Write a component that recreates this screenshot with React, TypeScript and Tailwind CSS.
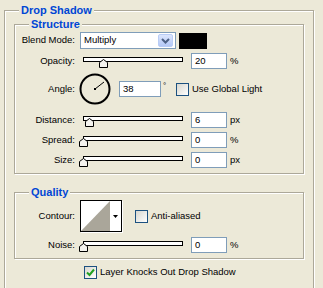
import type { ReactNode } from "react";

const Group = ({ title, className, children }: { title: string; className: string; children: ReactNode }) => (
  <div className={`border border-[#aca899] shadow-[inset_1px_1px_0_#fff,1px_1px_0_#fff] ${className}`}>
    <div className="-mt-[7px] ml-[14px] w-fit px-[2px] h-[12px] leading-[12px] bg-[#ece9d8] text-[11px] font-bold text-[#0046d5]">
      {title}
    </div>
    {children}
  </div>
);

const Label = ({ children }: { children: ReactNode }) => (
  <div className="w-[60px] shrink-0 text-right whitespace-nowrap">{children}</div>
);

const Field = ({ value, w = "w-[36px]" }: { value: string; w?: string }) => (
  <div className={`${w} h-[16px] ml-[8px] border border-[#7f9db9] bg-white pl-[3px] leading-[14px]`}>{value}</div>
);

const Slider = ({ pos }: { pos: number }) => (
  <div className="relative w-[100px] h-[16px] ml-[8px] shrink-0">
    <div className="absolute left-0 top-[4px] w-[100px] h-[5px] border border-black bg-white" />
    <svg className="absolute top-[6px]" style={{ left: pos - 4 }} width="9" height="9">
      <path d="M0.5 8.5 V3.5 L4.5 0.5 L8.5 3.5 V8.5 Z" fill="#f4f3ee" stroke="#000" />
    </svg>
  </div>
);

const Check = ({ on = false }: { on?: boolean }) => (
  <div className="w-[13px] h-[13px] shrink-0 border border-[#1c5180] bg-gradient-to-br from-[#d8d7cf] to-white flex items-center justify-center">
    {on && (
      <svg width="9" height="9" viewBox="0 0 9 9">
        <path d="M1 4.5 L3.5 7 L8 1.5" fill="none" stroke="#21a121" strokeWidth="2" />
      </svg>
    )}
  </div>
);

const SliderRow = ({ label, pos, value, unit, className }: { label: string; pos: number; value: string; unit: string; className: string }) => (
  <div className={`flex items-center h-[16px] ${className}`}>
    <Label>{label}</Label>
    <Slider pos={pos} />
    <Field value={value} />
    <span className="ml-[3px]">{unit}</span>
  </div>
);

export default function App() {
  return (
    <div className="w-[323px] h-[288px] overflow-hidden bg-[#ece9d8] pt-[10px] pl-[4px] text-black text-[9.5px] font-['Liberation_Sans',Arial,sans-serif]">
      <Group title="Drop Shadow" className="w-[310px] h-[300px]">
        <Group title="Structure" className="mt-[8px] ml-[9px] w-[290px] h-[150px]">
          <div className="flex items-center h-[17px] mt-[2px]">
            <Label>Blend Mode:</Label>
            <div className="ml-[5px] w-[96px] h-[17px] border border-[#7f9db9] bg-white flex items-center">
              <span className="pl-[3px] flex-1">Multiply</span>
              <div className="w-[15px] h-[13px] mr-[2px] rounded-[2px] border border-[#b9cdf6] bg-gradient-to-b from-[#dce6fd] to-[#b4c8f6] flex items-center justify-center">
                <svg width="9" height="6" viewBox="0 0 9 6">
                  <path d="M1 1 L4.5 4.5 L8 1" fill="none" stroke="#4d6185" strokeWidth="2" />
                </svg>
              </div>
            </div>
            <div className="ml-[3px] w-[28px] h-[16px] bg-black" />
          </div>
          <SliderRow label="Opacity:" pos={20} value="20" unit="%" className="mt-[4px]" />
          <div className="flex items-center h-[32px] mt-[4px]">
            <Label>Angle:</Label>
            <svg className="ml-[4px] shrink-0" width="32" height="32" viewBox="0 0 32 32">
              <circle cx="16" cy="16" r="14.5" fill="none" stroke="#000" strokeWidth="2" />
              <rect x="15" y="15" width="2" height="2" fill="#000" />
              <path d="M16 16 L25 9" stroke="#000" strokeWidth="1" />
            </svg>
            <Field value="38" w="w-[42px]" />
            <span className="self-start mt-[7px] ml-[2px] w-[13px] text-[8px]">°</span>
            <Check />
            <span className="ml-[3px]">Use Global Light</span>
          </div>
          <SliderRow label="Distance:" pos={6} value="6" unit="px" className="mt-[7px]" />
          <SliderRow label="Spread:" pos={0} value="0" unit="%" className="mt-[4px]" />
          <SliderRow label="Size:" pos={0} value="0" unit="px" className="mt-[4px]" />
        </Group>
        <Group title="Quality" className="mt-[18px] ml-[9px] w-[290px] h-[67px]">
          <div className="flex items-center h-[32px] mt-[2px]">
            <Label>Contour:</Label>
            <div className="ml-[5px] w-[42px] h-[32px] border border-black shadow-[1px_1px_0_#fff] flex bg-white">
              <svg width="29" height="30" viewBox="0 0 29 30">
                <polygon points="0,30 29,0 29,30" fill="#aaa69a" />
              </svg>
              <div className="flex-1 flex items-center justify-center">
                <svg width="5" height="3" viewBox="0 0 5 3">
                  <polygon points="0,0 5,0 2.5,3" fill="#000" />
                </svg>
              </div>
            </div>
            <div className="ml-[13px]">
              <Check />
            </div>
            <span className="ml-[3px]">Anti-aliased</span>
          </div>
          <SliderRow label="Noise:" pos={0} value="0" unit="%" className="mt-[5px]" />
        </Group>
        <div className="flex items-center mt-[6px] ml-[79px]">
          <Check on />
          <span className="ml-[3px]">Layer Knocks Out Drop Shadow</span>
        </div>
      </Group>
    </div>
  );
}
